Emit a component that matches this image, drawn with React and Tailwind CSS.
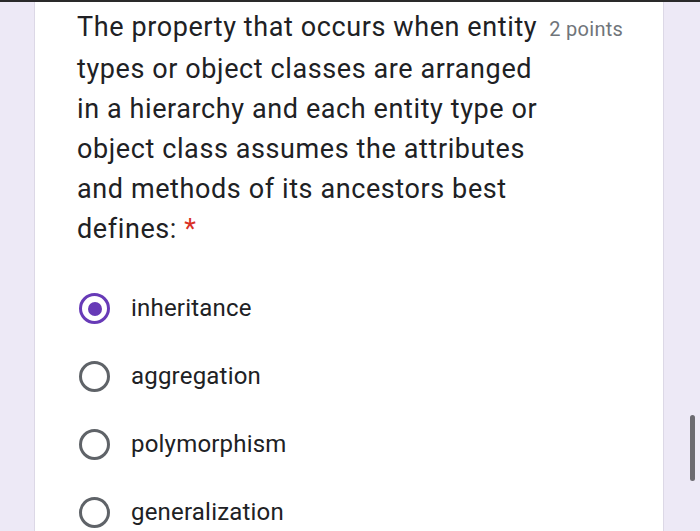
import React from 'react'

const options = ['inheritance', 'aggregation', 'polymorphism', 'generalization']

const Radio = ({ checked }) => (
  <div
    className={
      'flex h-[31px] w-[31px] shrink-0 items-center justify-center rounded-full border-[3px] ' +
      (checked ? 'border-[#673ab7]' : 'border-[#5f6368]')
    }
  >
    {checked && <div className="h-[14px] w-[14px] rounded-full bg-[#673ab7]" />}
  </div>
)

export default function App() {
  return (
    <div
      className="flex h-[531px] w-[700px] overflow-hidden border-t-2 border-[#2a2a2a] bg-[#ede9f6]"
      style={{ fontFamily: 'Roboto, "Liberation Sans", sans-serif' }}
    >
      <div className="w-[35px] shrink-0 border-r border-[#dcd8e6]" />
      <div className="w-[628px] shrink-0 bg-white pl-[42px] pr-[20px] pt-[5px]">
        <div className="text-[27px] leading-[40px] tracking-[0.6px] text-[#202124]">
          <div className="flex items-baseline whitespace-nowrap">
            <span>The property that occurs when entity</span>
            <span className="ml-[12px] text-[20px] tracking-[0.3px] text-[#70757a]">2 points</span>
          </div>
          <div>types or object classes are arranged</div>
          <div>in a hierarchy and each entity type or</div>
          <div>object class assumes the attributes</div>
          <div>and methods of its ancestors best</div>
          <div>
            defines: <span className="text-[#d93025]">*</span>
          </div>
        </div>
        <div className="mt-[44px] flex flex-col gap-[37px] pl-[2px]">
          {options.map((o, i) => (
            <div key={o} className="flex items-center gap-[21px]">
              <Radio checked={i === 0} />
              <span className="text-[24px] leading-[31px] tracking-[0.2px] text-[#202124]">{o}</span>
            </div>
          ))}
        </div>
      </div>
      <div className="relative flex-1 border-l border-[#dcd8e6]">
        <div className="absolute left-[26px] top-[413px] h-[66px] w-[5px] rounded-full bg-[#6b6a70]" />
      </div>
    </div>
  )
}
